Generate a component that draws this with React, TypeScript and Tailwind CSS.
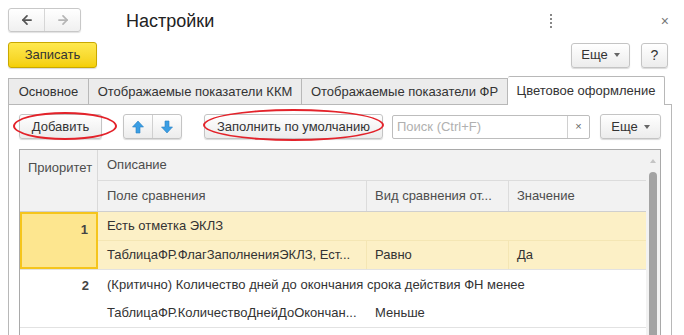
import { ArrowLeft, ArrowRight } from "lucide-react";

const font = { fontFamily: '"Liberation Sans", Arial, sans-serif' };

function Btn({ children, className = "" }: { children: React.ReactNode; className?: string }) {
  return (
    <div
      className={`flex items-center justify-center rounded-[3px] border border-[#c4c4c4] bg-gradient-to-b from-white to-[#ececec] text-[13px] text-[#333] shadow-[0_1px_1px_rgba(0,0,0,0.15)] ${className}`}
    >
      {children}
    </div>
  );
}

function Caret() {
  return <span className="ml-[6px] inline-block h-0 w-0 border-x-[3px] border-t-[4px] border-x-transparent border-t-[#666]" />;
}

function Ellipse({ className }: { className: string }) {
  return <div className={`pointer-events-none absolute rounded-[50%] border-2 border-[#e3222a] ${className}`} />;
}

function BlueArrow({ down = false }: { down?: boolean }) {
  return (
    <svg width="12" height="14" viewBox="0 0 12 14" className={down ? "rotate-180" : ""}>
      <path d="M6 1 L11.5 7 L8 7 L8 13 L4 13 L4 7 L0.5 7 Z" fill="#3a9ee4" stroke="#2a7fc2" strokeWidth="0.6" />
    </svg>
  );
}

const rows = [
  {
    n: "1",
    desc: "Есть отметка ЭКЛЗ",
    field: "ТаблицаФР.ФлагЗаполненияЭКЛЗ, Ест...",
    kind: "Равно",
    value: "Да",
    active: true,
  },
  {
    n: "2",
    desc: "(Критично) Количество дней до окончания срока действия ФН менее",
    field: "ТаблицаФР.КоличествоДнейДоОкончан...",
    kind: "Меньше",
    value: "",
    active: false,
  },
];

export default function App() {
  return (
    <div className="relative h-[335px] w-[684px] overflow-hidden bg-white text-[13px] text-[#333]" style={font}>
      {/* Title bar */}
      <div className="flex h-[32px] items-end pl-[8px]">
        <div className="flex h-[24px] w-[73px] rounded-[3px] border border-[#c8c8c8] bg-gradient-to-b from-white to-[#f0f0f0] shadow-[0_1px_1px_rgba(0,0,0,0.12)]">
          <div className="flex flex-1 items-center justify-center border-r border-[#d6d6d6]">
            <ArrowLeft size={14} strokeWidth={3} color="#555" />
          </div>
          <div className="flex flex-1 items-center justify-center">
            <ArrowRight size={14} strokeWidth={3} color="#b5b5b5" />
          </div>
        </div>
        <div className="ml-[45px] self-center pt-[10px] text-[18px] text-[#222]">Настройки</div>
        <div className="ml-auto flex items-center self-center pt-[10px]">
          <div className="flex flex-col gap-[2px]">
            <span className="h-[2px] w-[2px] bg-[#888]" />
            <span className="h-[2px] w-[2px] bg-[#888]" />
            <span className="h-[2px] w-[2px] bg-[#888]" />
            <span className="h-[2px] w-[2px] bg-[#888]" />
          </div>
          <span className="ml-[109px] mr-[15px] text-[14px] text-[#777]">×</span>
        </div>
      </div>

      {/* Command bar */}
      <div className="mt-[10px] flex h-[26px] items-center pl-[8px] pr-[16px]">
        <div className="flex h-[26px] w-[89px] items-center justify-center rounded-[3px] border border-[#c9a800] bg-gradient-to-b from-[#ffe94d] to-[#f4cf00] text-[13px] text-[#333] shadow-[0_1px_1px_rgba(0,0,0,0.15)]">
          Записать
        </div>
        <Btn className="ml-auto h-[25px] w-[59px]">
          Еще <Caret />
        </Btn>
        <Btn className="ml-[11px] h-[25px] w-[27px] text-[14px]">?</Btn>
      </div>

      {/* Tabs */}
      <div className="mt-[8px] flex h-[28px] items-end pl-[8px]">
        <div className="flex h-[26px] w-[81px] items-center justify-center border border-b-0 border-[#b8b8b8] bg-[#ececec]">Основное</div>
        <div className="flex h-[26px] w-[213px] items-center justify-center border border-b-0 border-l-0 border-[#b8b8b8] bg-[#ececec]">
          Отображаемые показатели ККМ
        </div>
        <div className="flex h-[26px] w-[206px] items-center justify-center border border-b-0 border-l-0 border-[#b8b8b8] bg-[#ececec]">
          Отображаемые показатели ФР
        </div>
        <div className="relative -mb-px flex h-[29px] w-[157px] items-center justify-center rounded-t-[2px] border border-b-0 border-l-0 border-[#b8b8b8] bg-white">
          Цветовое оформление
        </div>
      </div>

      {/* Tab panel */}
      <div className="ml-[8px] h-[240px] w-[664px] border border-b-0 border-[#b8b8b8] pl-[10px] pt-[9px]">
        <div className="relative flex h-[25px] items-center">
          <Btn className="h-[25px] w-[83px]">Добавить</Btn>
          <div className="ml-[21px] flex h-[25px] w-[59px] rounded-[3px] border border-[#c4c4c4] bg-gradient-to-b from-white to-[#ececec] shadow-[0_1px_1px_rgba(0,0,0,0.15)]">
            <div className="flex flex-1 items-center justify-center border-r border-[#d0d0d0]">
              <BlueArrow />
            </div>
            <div className="flex flex-1 items-center justify-center">
              <BlueArrow down />
            </div>
          </div>
          <Btn className="ml-[22px] h-[25px] w-[179px]">Заполнить по умолчанию</Btn>
          <div className="ml-[9px] flex h-[24px] w-[198px] rounded-[2px] border border-[#bdbdbd] bg-white">
            <div className="flex flex-1 items-center pl-[4px] text-[#b0b0b0]">Поиск (Ctrl+F)</div>
            <div className="flex w-[22px] items-center justify-center border-l border-[#d0d0d0] text-[11px] text-[#666]">×</div>
          </div>
          <Btn className="ml-[10px] h-[25px] w-[61px]">
            Еще <Caret />
          </Btn>
          <Ellipse className="left-[-6px] top-[-2px] h-[28px] w-[104px]" />
          <Ellipse className="left-[184px] top-[-5px] h-[32px] w-[181px]" />
        </div>

        {/* Table */}
        <div className="mt-[10px] flex w-[642px] border border-b-0 border-[#a9a9a9]">
          <div className="flex w-[626px] flex-col">
            {/* header */}
            <div className="flex h-[62px] border-b border-[#cfcfcf] bg-[#f2f2f2] text-[#4d4d4d]">
              <div className="w-[78px] border-r border-[#d9d9d9] pl-[8px] pt-[8px]">Приоритет</div>
              <div className="flex flex-1 flex-col">
                <div className="flex h-[31px] items-center border-b border-[#dcdcdc] pl-[9px]">Описание</div>
                <div className="flex flex-1">
                  <div className="flex w-[269px] items-center border-r border-[#dcdcdc] pl-[9px]">Поле сравнения</div>
                  <div className="flex w-[142px] items-center border-r border-[#dcdcdc] pl-[8px]">Вид сравнения от...</div>
                  <div className="flex flex-1 items-center pl-[8px]">Значение</div>
                </div>
              </div>
            </div>
            {rows.map((r) => (
              <div key={r.n} className={`flex h-[58px] border-b border-[#e2e2e2] ${r.active ? "bg-[#fcf0c6]" : "bg-white"}`}>
                <div
                  className={`flex w-[78px] justify-end pr-[8px] pt-[6px] font-bold text-[#444] ${
                    r.active ? "border-2 border-[#f5c51c] bg-[#fde68f] pr-[6px] pt-[4px]" : "border-r border-transparent"
                  }`}
                >
                  {r.n}
                </div>
                <div className="flex flex-1 flex-col">
                  <div className={`flex h-[29px] items-center pl-[9px] ${r.active ? "border-b border-[#f4e6b4]" : ""}`}>{r.desc}</div>
                  <div className="flex flex-1">
                    <div className={`flex w-[269px] items-center pl-[9px] ${r.active ? "border-r border-[#f4e6b4]" : ""}`}>{r.field}</div>
                    <div className={`flex w-[142px] items-center pl-[8px] ${r.active ? "border-r border-[#f4e6b4]" : ""}`}>{r.kind}</div>
                    <div className="flex flex-1 items-center pl-[8px]">{r.value}</div>
                  </div>
                </div>
              </div>
            ))}
          </div>
          {/* scrollbar */}
          <div className="flex w-[14px] flex-col items-center bg-[#f2f2f2]">
            <span className="mt-[9px] h-0 w-0 border-x-[3px] border-b-[4px] border-x-transparent border-b-[#c4c4c4]" />
            <span className="mt-[9px] h-[200px] w-[8px] rounded-[4px] bg-[#a3a3a3]" />
          </div>
        </div>
      </div>
    </div>
  );
}
